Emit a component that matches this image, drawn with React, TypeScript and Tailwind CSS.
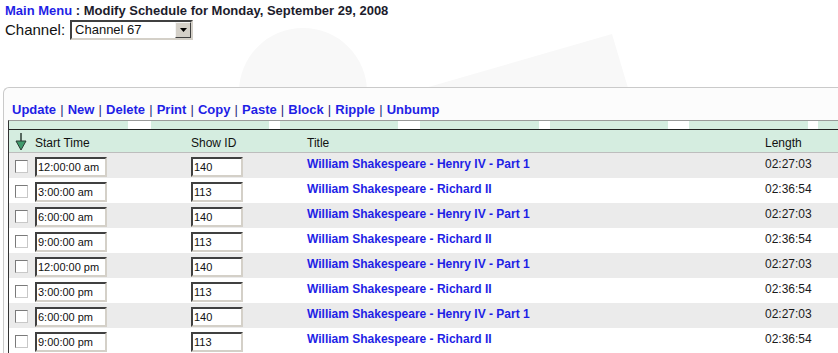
import React from "react";

const ROWS = [
  { time: "12:00:00 am", id: "140", title: "William Shakespeare - Henry IV - Part 1", len: "02:27:03" },
  { time: "3:00:00 am", id: "113", title: "William Shakespeare - Richard II", len: "02:36:54" },
  { time: "6:00:00 am", id: "140", title: "William Shakespeare - Henry IV - Part 1", len: "02:27:03" },
  { time: "9:00:00 am", id: "113", title: "William Shakespeare - Richard II", len: "02:36:54" },
  { time: "12:00:00 pm", id: "140", title: "William Shakespeare - Henry IV - Part 1", len: "02:27:03" },
  { time: "3:00:00 pm", id: "113", title: "William Shakespeare - Richard II", len: "02:36:54" },
  { time: "6:00:00 pm", id: "140", title: "William Shakespeare - Henry IV - Part 1", len: "02:27:03" },
  { time: "9:00:00 pm", id: "113", title: "William Shakespeare - Richard II", len: "02:36:54" },
];

const ACTIONS = ["Update", "New", "Delete", "Print", "Copy", "Paste", "Block", "Ripple", "Unbump"];

// green strip above the header: [width, isGap]
const STRIP: Array<[number, boolean]> = [
  [121, false], [23, true], [120, false], [11, true], [120, false], [22, true],
  [121, false], [11, true], [120, false], [21, true], [121, false], [10, true], [20, false],
];

function SortArrow() {
  return (
    <svg width="12" height="18" viewBox="0 0 12 18">
      <line x1="6" y1="0" x2="6" y2="9" stroke="#2b3a33" strokeWidth="1.5" />
      <path d="M1 8 L11 8 L6 17 Z" fill="#3f9a6c" stroke="#2b3a33" strokeWidth="1" />
    </svg>
  );
}

function Field({ value, width }: { value: string; width: number }) {
  return (
    <input
      readOnly
      value={value}
      style={{ width }}
      className="mt-[4px] h-[20px] border-2 border-t-[#404040] border-l-[#404040] border-r-[#d4d0c8] border-b-[#d4d0c8] bg-white px-[1px] text-[11px] leading-[16px] text-[#111] outline-none"
    />
  );
}

export default function App() {
  return (
    <div className="relative min-h-[353px] w-[838px] overflow-hidden bg-white font-['Liberation_Sans',Arial,sans-serif] text-[#111]">
      {/* faint background artwork */}
      <svg className="absolute left-0 top-0" width="838" height="90" viewBox="0 0 838 90">
        <circle cx="303" cy="92" r="64" fill="#f8f8f8" />
        <path d="M425 88 L612 34 L628 88 Z" fill="#f8f8f8" />
      </svg>

      <div className="relative pl-[5px] pt-[3px]">
        <div className="text-[13px] font-bold leading-[15px]">
          <span className="text-[#1f1fe6]">Main Menu</span>
          <span className="text-[#1c1c2c]"> : Modify Schedule for Monday, September 29, 2008</span>
        </div>
        <div className="mt-[2px] flex h-[20px] items-center">
          <span className="text-[15px] leading-[18px] text-[#111]">Channel:</span>
          <div className="ml-[5px] flex h-[20px] w-[123px] items-center border-2 border-t-[#404040] border-l-[#404040] border-r-[#d4d0c8] border-b-[#d4d0c8] bg-white">
            <span className="flex-1 pl-[3px] text-[13px] leading-[16px] text-[#111]">Channel 67</span>
            <div className="flex h-[16px] w-[16px] items-center justify-center border border-t-[#f4f4f4] border-l-[#f4f4f4] border-r-[#404040] border-b-[#404040] bg-[#d4d0c8]">
              <svg width="7" height="4" viewBox="0 0 7 4">
                <path d="M0 0 L7 0 L3.5 4 Z" fill="#000" />
              </svg>
            </div>
          </div>
        </div>
      </div>

      <div className="relative ml-[3px] mt-[47px] rounded-tl-[6px] border-l border-t border-[#cacaca] bg-[#fcfcfc] pb-[20px]">
        <div className="pl-[8px] pt-[14px] text-[13px] font-bold leading-[16px] text-[#1f1fe6]">
          {ACTIONS.map((a, i) => (
            <span key={a}>
              {i > 0 && <span className="mx-[0.5px] font-normal text-[#2a2a7a]"> | </span>}
              <span>{a}</span>
            </span>
          ))}
        </div>

        <div className="ml-[4px] mt-[2px] border-l border-t border-l-[#333] border-t-[#9a9a9a]">
          <div className="flex h-[8px]">
            {STRIP.map(([w, gap], i) => (
              <div key={i} style={{ width: w }} className={gap ? "bg-white" : "bg-[#d5ede0]"} />
            ))}
          </div>
          <div className="flex h-[24px] border-b border-t border-b-[#bdbdbd] border-t-[#222] bg-[#d5ede0] text-[12px] leading-[14px]">
            <div className="w-[26px] pl-[6px] pt-[3px]">
              <SortArrow />
            </div>
            <div className="w-[156px] pt-[6px]">Start Time</div>
            <div className="w-[116px] pt-[6px]">Show ID</div>
            <div className="w-[458px] pt-[6px]">Title</div>
            <div className="flex-1 pt-[6px]">Length</div>
          </div>

          {ROWS.map((r, i) => (
            <div
              key={i}
              className={`flex h-[25px] text-[12px] leading-[14px] ${i % 2 === 0 ? "bg-[#ebebeb]" : "bg-white"}`}
            >
              <div className="w-[26px] pl-[6px] pt-[7px]">
                <div className="h-[13px] w-[13px] border border-t-[#7a7a7a] border-l-[#7a7a7a] border-r-[#c8c8c8] border-b-[#c8c8c8] bg-white" />
              </div>
              <div className="w-[156px]">
                <Field value={r.time} width={72} />
              </div>
              <div className="w-[116px]">
                <Field value={r.id} width={52} />
              </div>
              <div className="w-[458px] pt-[4px] font-bold text-[#1f1fe6]">{r.title}</div>
              <div className="flex-1 pt-[4px] text-[#1a1a1a]">{r.len}</div>
            </div>
          ))}
        </div>
      </div>
    </div>
  );
}
